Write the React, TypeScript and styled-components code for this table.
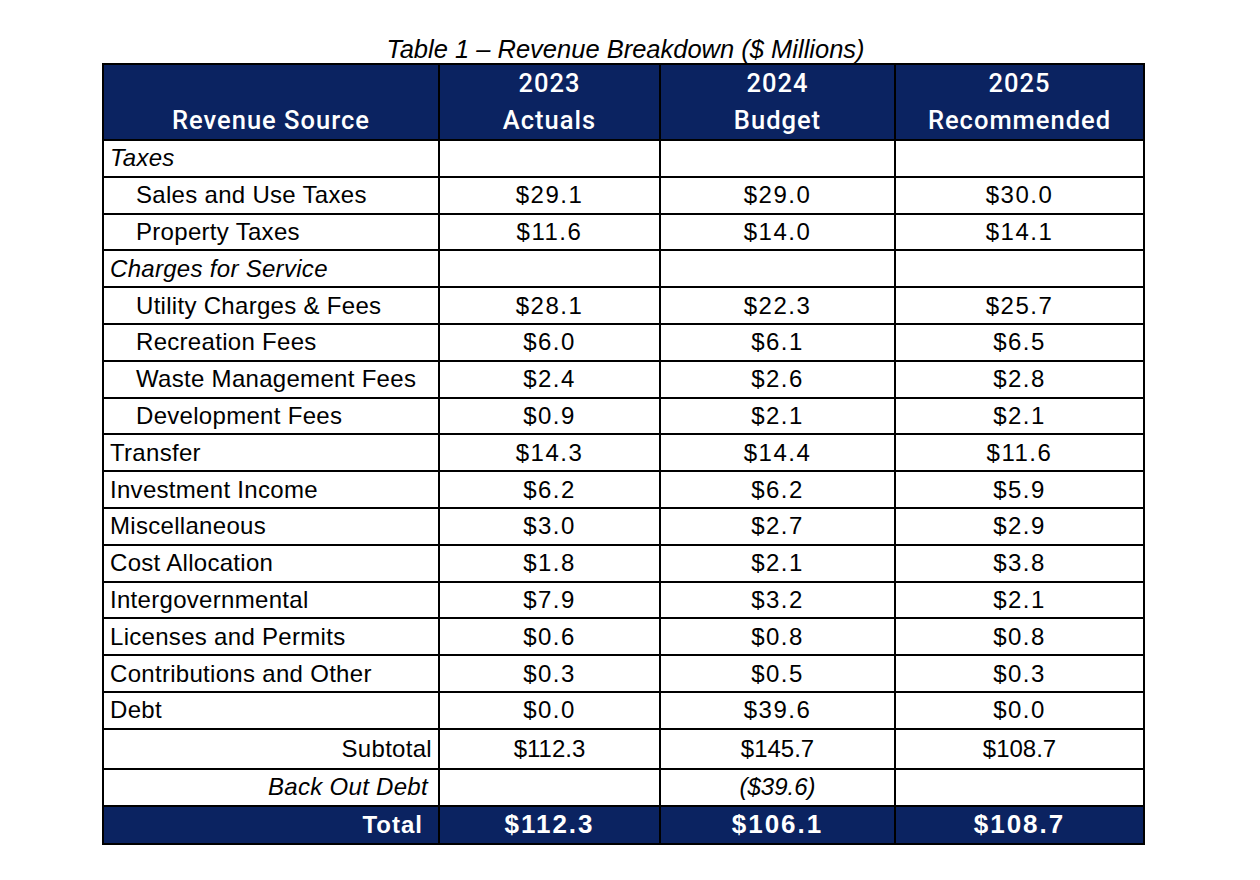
import React from "react";
import styled, { createGlobalStyle } from "styled-components";

const Global = createGlobalStyle`
  html, body { margin: 0; padding: 0; background: #ffffff; }
  body { font-family: "Liberation Sans", Arial, sans-serif; color: #000; }
`;

const NAVY = "#0b2361";

const Page = styled.div`
  width: 1260px;
  height: 880px;
  display: flex;
  flex-direction: column;
  align-items: flex-start;
  padding: 35px 0 0 102px;
  box-sizing: border-box;
`;

const Title = styled.div`
  width: 1041px;
  text-align: center;
  font-family: "Liberation Sans", Arial, sans-serif;
  font-style: italic;
  font-size: 25.5px;
  line-height: 28px;
  padding-left: 6px;
  box-sizing: border-box;
`;

const Table = styled.table`
  border-collapse: collapse;
  table-layout: fixed;
  width: 1041px;
  border: 2px solid #000;
`;

const HeadCell = styled.th`
  background: ${NAVY};
  color: #fff;
  font-family: "Roboto", "Liberation Sans", sans-serif;
  font-weight: 500;
  font-size: 25.5px;
  letter-spacing: 1px;
  line-height: 37px;
  height: 74px;
  padding: 0;
  vertical-align: bottom;
  text-align: center;
  border: 2px solid #000;
  border-top: none;
`;

const Row = styled.tr<{ $h?: number }>`
  height: ${(p) => p.$h ?? 36.8}px;
`;

const Label = styled.td<{ $indent?: boolean; $italic?: boolean; $right?: boolean }>`
  font-family: "Liberation Sans", Arial, sans-serif;
  font-size: 24px;
  letter-spacing: 0.3px;
  font-style: ${(p) => (p.$italic ? "italic" : "normal")};
  text-align: ${(p) => (p.$right ? "right" : "left")};
  padding: 0 ${(p) => (p.$right ? (p.$italic ? "10px" : "6px") : "0")} 0
    ${(p) => (p.$indent ? "32px" : "6px")};
  border: 2px solid #000;
  white-space: nowrap;
`;

const Num = styled.td<{ $italic?: boolean; $plain?: boolean }>`
  font-family: "Liberation Sans", Arial, sans-serif;
  font-size: 24px;
  letter-spacing: ${(p) => (p.$plain ? "0" : "1.5px")};
  font-style: ${(p) => (p.$italic ? "italic" : "normal")};
  text-align: center;
  padding: 0;
  border: 2px solid #000;
`;

const TotalLabel = styled.td`
  background: ${NAVY};
  color: #fff;
  font-family: "Liberation Sans", Arial, sans-serif;
  font-weight: 700;
  font-size: 24px;
  letter-spacing: 1px;
  text-align: right;
  padding: 0 15px 0 0;
  border: 2px solid #000;
`;

const TotalNum = styled.td`
  background: ${NAVY};
  color: #fff;
  font-family: "Liberation Sans", Arial, sans-serif;
  font-weight: 700;
  font-size: 26px;
  letter-spacing: 2px;
  text-align: center;
  padding: 0;
  border: 2px solid #000;
`;

type R = {
  label: string;
  vals: [string, string, string];
  indent?: boolean;
  italic?: boolean;
};

const rows: R[] = [
  { label: "Taxes", vals: ["", "", ""], italic: true },
  { label: "Sales and Use Taxes", vals: ["$29.1", "$29.0", "$30.0"], indent: true },
  { label: "Property Taxes", vals: ["$11.6", "$14.0", "$14.1"], indent: true },
  { label: "Charges for Service", vals: ["", "", ""], italic: true },
  { label: "Utility Charges & Fees", vals: ["$28.1", "$22.3", "$25.7"], indent: true },
  { label: "Recreation Fees", vals: ["$6.0", "$6.1", "$6.5"], indent: true },
  { label: "Waste Management Fees", vals: ["$2.4", "$2.6", "$2.8"], indent: true },
  { label: "Development Fees", vals: ["$0.9", "$2.1", "$2.1"], indent: true },
  { label: "Transfer", vals: ["$14.3", "$14.4", "$11.6"] },
  { label: "Investment Income", vals: ["$6.2", "$6.2", "$5.9"] },
  { label: "Miscellaneous", vals: ["$3.0", "$2.7", "$2.9"] },
  { label: "Cost Allocation", vals: ["$1.8", "$2.1", "$3.8"] },
  { label: "Intergovernmental", vals: ["$7.9", "$3.2", "$2.1"] },
  { label: "Licenses and Permits", vals: ["$0.6", "$0.8", "$0.8"] },
  { label: "Contributions and Other", vals: ["$0.3", "$0.5", "$0.3"] },
  { label: "Debt", vals: ["$0.0", "$39.6", "$0.0"] },
];

export default function App() {
  return (
    <>
      <Global />
      <Page>
        <Title>Table 1 – Revenue Breakdown ($ Millions)</Title>
        <Table>
          <colgroup>
            <col style={{ width: 336 }} />
            <col style={{ width: 221 }} />
            <col style={{ width: 235 }} />
            <col style={{ width: 249 }} />
          </colgroup>
          <thead>
            <tr>
              <HeadCell>Revenue Source</HeadCell>
              <HeadCell>2023<br />Actuals</HeadCell>
              <HeadCell>2024<br />Budget</HeadCell>
              <HeadCell>2025<br />Recommended</HeadCell>
            </tr>
          </thead>
          <tbody>
            {rows.map((r) => (
              <Row key={r.label}>
                <Label $indent={r.indent} $italic={r.italic}>{r.label}</Label>
                {r.vals.map((v, i) => (
                  <Num key={i}>{v}</Num>
                ))}
              </Row>
            ))}
            <Row $h={40}>
              <Label $right>Subtotal</Label>
              <Num $plain>$112.3</Num>
              <Num $plain>$145.7</Num>
              <Num $plain>$108.7</Num>
            </Row>
            <Row>
              <Label $right $italic>Back Out Debt</Label>
              <Num />
              <Num $italic $plain>($39.6)</Num>
              <Num />
            </Row>
            <Row $h={38}>
              <TotalLabel>Total</TotalLabel>
              <TotalNum>$112.3</TotalNum>
              <TotalNum>$106.1</TotalNum>
              <TotalNum>$108.7</TotalNum>
            </Row>
          </tbody>
        </Table>
      </Page>
    </>
  );
}
